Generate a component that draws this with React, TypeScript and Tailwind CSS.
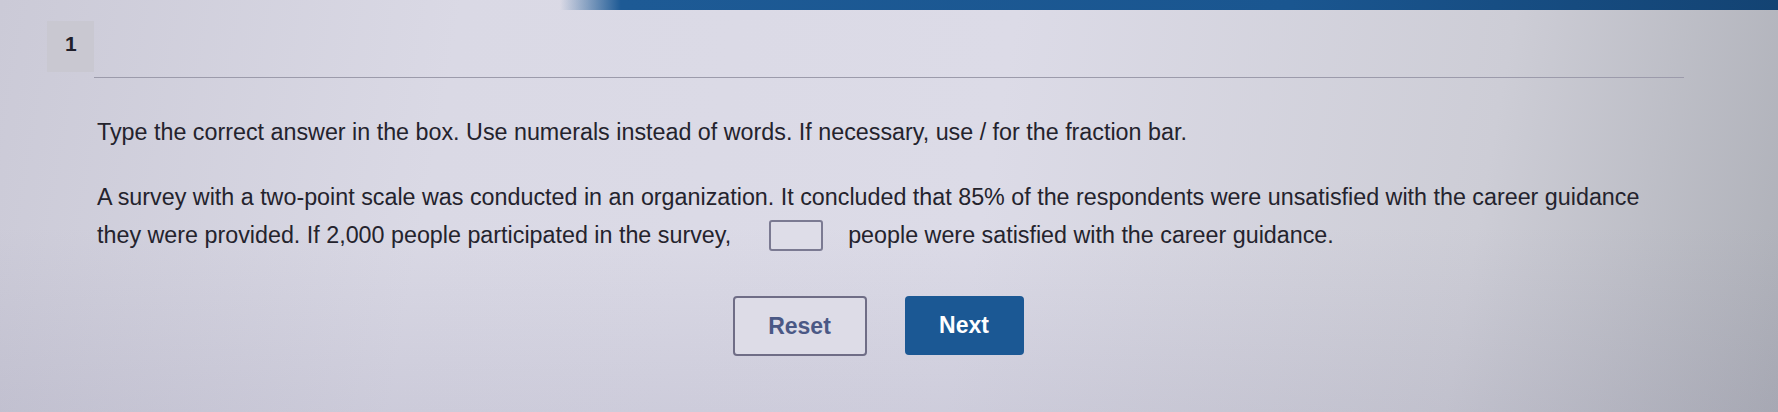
import React from "react";

export default function App() {
  return (
    <div
      className="relative w-[1778px] h-[412px] overflow-hidden bg-[linear-gradient(100deg,#cbcad7_0%,#dad9e5_25%,#dcdbe7_55%,#cdcdd6_82%,#aeb0b8_100%)] text-[#24232d]"
      style={{ fontFamily: '"Liberation Sans", Arial, sans-serif' }}
    >
      {/* soft darkening toward the lower edge */}
      <div className="pointer-events-none absolute inset-0 bg-[linear-gradient(180deg,rgba(255,255,255,0)_55%,rgba(120,118,150,0.14)_100%)]" />

      <div className="relative">
        {/* top app bar */}
        <div className="ml-[560px] h-[10px] bg-[linear-gradient(90deg,rgba(30,90,148,0)_0%,#1d5a95_5%,#1a5690_60%,#134373_100%)]" />

        {/* question number header */}
        <div className="flex items-start pl-[47px] pt-[11px]">
          <div className="w-[47px] h-[51px] bg-[#c9c8d1] pl-[18px] pt-[11px] text-[21px] font-bold leading-[24px] text-[#1f1f2a]">
            1
          </div>
          <div className="mt-[56px] w-[1590px] h-px bg-[#9c9bab]" />
        </div>

        {/* instructions */}
        <p className="pl-[97px] mt-[40px] text-[23.3px] leading-[28px]">
          Type the correct answer in the box. Use numerals instead of words. If necessary, use / for the fraction bar.
        </p>

        {/* question body */}
        <div className="pl-[97px] mt-[32px] w-[1700px] text-[23.3px] leading-[38px]">
          <p>
            A survey with a two-point scale was conducted in an organization. It concluded that 85% of the respondents were unsatisfied with the career guidance
          </p>
          <p className="flex items-center">
            <span>they were provided. If 2,000 people participated in the survey,</span>
            <span className="ml-[38px] mr-[25px] inline-block w-[54px] h-[31px] rounded-[3px] border-2 border-[#7b7a92] bg-[#dedde8]" />
            <span>people were satisfied with the career guidance.</span>
          </p>
        </div>

        {/* actions */}
        <div className="ml-[96px] w-[1564px] mt-[42px] flex justify-center gap-[38px]">
          <button className="w-[134px] h-[60px] rounded-[4px] border-2 border-[#6f6d86] bg-[#dddce7] text-[23px] font-bold text-[#4a5885]">
            Reset
          </button>
          <button className="w-[119px] h-[59px] rounded-[4px] bg-[#1b5894] text-[23px] font-bold text-white">
            Next
          </button>
        </div>
      </div>
    </div>
  );
}
